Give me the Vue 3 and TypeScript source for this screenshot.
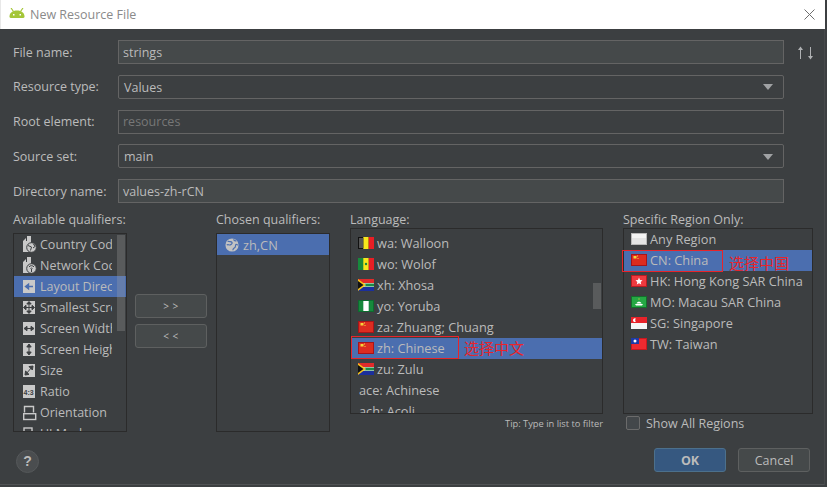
<script setup lang="ts">
type Row = { icon: string; text: string; selected?: boolean };

const fields = [
  { label: 'File name:', value: 'strings', kind: 'input' },
  { label: 'Resource type:', value: 'Values', kind: 'combo' },
  { label: 'Root element:', value: 'resources', kind: 'disabled' },
  { label: 'Source set:', value: 'main', kind: 'combo' },
  { label: 'Directory name:', value: 'values-zh-rCN', kind: 'input' },
];

const available: Row[] = [
  { icon: 'country', text: 'Country Code' },
  { icon: 'network', text: 'Network Code' },
  { icon: 'layout', text: 'Layout Direction', selected: true },
  { icon: 'smallest', text: 'Smallest Screen' },
  { icon: 'width', text: 'Screen Width' },
  { icon: 'height', text: 'Screen Height' },
  { icon: 'size', text: 'Size' },
  { icon: 'ratio', text: 'Ratio' },
  { icon: 'orient', text: 'Orientation' },
  { icon: 'ui', text: 'UI Mode' },
];

const languages: Row[] = [
  { icon: 'be', text: 'wa: Walloon' },
  { icon: 'sn', text: 'wo: Wolof' },
  { icon: 'za', text: 'xh: Xhosa' },
  { icon: 'ng', text: 'yo: Yoruba' },
  { icon: 'cn', text: 'za: Zhuang; Chuang' },
  { icon: 'cn', text: 'zh: Chinese', selected: true },
  { icon: 'za', text: 'zu: Zulu' },
  { icon: '', text: 'ace: Achinese' },
  { icon: '', text: 'ach: Acoli' },
];

const regions: Row[] = [
  { icon: 'any', text: 'Any Region' },
  { icon: 'cn', text: 'CN: China', selected: true },
  { icon: 'hk', text: 'HK: Hong Kong SAR China' },
  { icon: 'mo', text: 'MO: Macau SAR China' },
  { icon: 'sg', text: 'SG: Singapore' },
  { icon: 'tw', text: 'TW: Taiwan' },
];
</script>

<template>
  <div class="dialog">
    <header class="titlebar">
      <svg class="android" width="16" height="10" viewBox="0 0 16 10">
        <path d="M0.5 8.5C0.5 5 3.5 2.5 8 2.5S15.500 5 15.500 8.500Q15.500 10 14 10H2Q0.500 10 0.500 8.500Z" fill="#a4c639" />
        <path d="M2 0 4.500 3.500M14 0 11.500 3.500" stroke="#a4c639" stroke-width="1.200" />
        <rect x="4" y="6" width="1.500" height="1.500" fill="#fff" />
        <rect x="10.500" y="6" width="1.500" height="1.500" fill="#fff" />
      </svg>
      <span class="title">New Resource File</span>
      <svg class="close" width="11" height="11" viewBox="0 0 11 11">
        <path d="M0.5 0.5 10.500 10.500M10.500 0.5 0.5 10.500" stroke="#6e6e6e" stroke-width="1" />
      </svg>
    </header>

    <main class="body">
      <section class="form">
        <div v-for="f in fields" :key="f.label" class="field">
          <label class="field-label">{{ f.label }}</label>
          <div class="control" :class="f.kind">
            <span>{{ f.value }}</span>
            <i v-if="f.kind === 'combo'" class="caret"></i>
          </div>
        </div>
        <svg class="sort" width="16" height="14" viewBox="0 0 16 14">
          <path d="M2.500 13V3" stroke="#afb1b3" stroke-width="1" fill="none" />
          <path d="M0 4 2.500 0.500 5 4Z" fill="#afb1b3" />
          <path d="M12.500 1V11" stroke="#afb1b3" stroke-width="1" fill="none" />
          <path d="M10 10 12.500 13.500 15 10Z" fill="#afb1b3" />
        </svg>
      </section>

      <section class="columns">
        <div class="col col-available">
          <div class="col-label">Available qualifiers:</div>
          <div class="list tall">
            <div v-for="r in available" :key="r.text" class="row lifted" :class="{ selected: r.selected }">
              <svg class="qicon" width="16" height="18" viewBox="0 0 16 18">
                <template v-if="r.icon === 'country' || r.icon === 'network'">
                  <path d="M2 17V6L5 3V6H6V1H10V17Z" fill="#c9c9c9" />
                  <circle cx="10.500" cy="12.500" r="4.800" fill="#c9c9c9" stroke="#3c3f41" />
                  <path v-if="r.icon === 'network'" d="M8 11A3 3 0 0 1 13 11M9.500 12.500A1.500 1.500 0 0 1 11.500 12.500M10.500 13V16" stroke="#3c3f41" fill="none" />
                  <path v-else d="M7 10.500 10.500 12 9.500 15.500M12.500 9 14 11.500 12 13" stroke="#3c3f41" fill="none" />
                </template>
                <template v-else-if="r.icon === 'orient'">
                  <path d="M3.500 9.500V3.500H12.500V9.500" stroke="#c9c9c9" stroke-width="1.400" fill="none" />
                  <rect x="2.700" y="10.700" width="12" height="5.800" stroke="#c9c9c9" stroke-width="1.400" fill="none" />
                </template>
                <template v-else-if="r.icon === 'ui'">
                  <rect x="3" y="4" width="8" height="9" stroke="#c9c9c9" stroke-width="1.400" fill="none" />
                </template>
                <template v-else>
                  <rect x="2" y="3" width="12" height="13" fill="#c9c9c9" />
                  <path v-if="r.icon === 'layout'" d="M5 9.500H12M4.500 9.500 7.500 7.200V11.800Z" stroke="#4b6eaf" stroke-width="1.400" fill="#4b6eaf" />
                  <path v-else-if="r.icon === 'smallest'" d="M8 4V15M3 9.500H13M8 3.500 5.800 6H10.200ZM8 15.500 5.800 13H10.200ZM2.500 9.500 5 7.300V11.700ZM13.500 9.500 11 7.300V11.700Z" stroke="#3c3f41" fill="#3c3f41" />
                  <path v-else-if="r.icon === 'width'" d="M4 9.500H12M3 9.500 6 7.300V11.700ZM13 9.500 10 7.300V11.700Z" stroke="#3c3f41" fill="#3c3f41" />
                  <path v-else-if="r.icon === 'height'" d="M8 5V14M8 4 5.800 7H10.200ZM8 15 5.800 12H10.200Z" stroke="#3c3f41" fill="#3c3f41" />
                  <path v-else-if="r.icon === 'size'" d="M5 13 11 6M12 5 8 5.600 11.400 9ZM4 14 8 13.400 4.600 10Z" stroke="#3c3f41" fill="#3c3f41" />
                  <text v-else-if="r.icon === 'ratio'" x="2.600" y="12.500" class="tiny">4:3</text>
                </template>
              </svg>
              <span class="clip">{{ r.text }}</span>
            </div>
            <div class="thumb thumb-available"></div>
          </div>
        </div>

        <div class="mover">
          <button class="btn mover-btn" type="button">&gt; &gt;</button>
          <button class="btn mover-btn" type="button">&lt; &lt;</button>
        </div>

        <div class="col col-chosen">
          <div class="col-label">Chosen qualifiers:</div>
          <div class="list tall">
            <div class="row selected chosen-row">
              <svg class="globe" width="14" height="14" viewBox="0 0 16 16">
                <circle cx="8" cy="8" r="7.500" fill="#c2c2c2" />
                <path d="M3 3.500C5 5 7 3.500 8 5S6 8 5 8 3.500 7 2 8M9 14C9 11 12 12 12 9S14 8 15 8M10 1.500C10 3 12 3.500 13 3" stroke="#4b6eaf" stroke-width="1.400" fill="none" />
              </svg>
              <span>zh,CN</span>
            </div>
          </div>
        </div>

        <div class="col col-language">
          <div class="col-label">Language:</div>
          <div class="list short">
            <div class="lang-rows">
              <div v-for="r in languages" :key="r.text" class="row" :class="{ selected: r.selected, plain: !r.icon }">
                <svg v-if="r.icon" class="flag" width="16" height="12" viewBox="0 0 16 12">
                  <g v-if="r.icon === 'be'"><rect width="16" height="12" fill="#111" /><rect x="5.300" width="5.400" height="12" fill="#f6e71c" /><rect x="10.700" width="5.300" height="12" fill="#e81e25" /><rect x="1" y="1" width="4.300" height="10" fill="#555" /></g>
                  <g v-else-if="r.icon === 'sn'"><rect width="16" height="12" fill="#17893c" /><rect x="5.300" width="5.400" height="12" fill="#f6e71c" /><rect x="10.700" width="5.300" height="12" fill="#e81e25" /><circle cx="8" cy="6" r="1.200" fill="#17893c" /></g>
                  <g v-else-if="r.icon === 'za'"><rect width="16" height="12" fill="#fff" /><rect width="16" height="4" fill="#e02a2a" /><rect y="8" width="16" height="4" fill="#1b2f9c" /><path d="M0 0 8 6 0 12Z" fill="#f4c21a" /><path d="M0 2 5.500 6 0 10Z" fill="#111" /><path d="M6 4.500H16V7.500H6L8 6Z" fill="#1c8a46" /></g>
                  <g v-else-if="r.icon === 'ng'"><rect width="16" height="12" fill="#0e6a30" /><rect x="1" y="1" width="4.300" height="10" fill="#17893c" /><rect x="10.700" y="1" width="4.300" height="10" fill="#17893c" /><rect x="5.300" y="1" width="5.400" height="10" fill="#fff" /></g>
                  <g v-else-if="r.icon === 'cn'"><rect width="16" height="12" fill="#a8141a" /><rect x="1" y="1" width="14" height="10" fill="#dd2c20" /><path d="M2.500 2H5.500V4.500H2.500Z" fill="#f5d73a" /><rect x="6" y="1.500" width="1" height="1" fill="#f5d73a" /><rect x="6.500" y="4" width="1" height="1" fill="#f5d73a" /></g>
                </svg>
                <span>{{ r.text }}</span>
              </div>
            </div>
            <div class="thumb thumb-language"></div>
          </div>
          <div class="tip">Tip: Type in list to filter</div>
        </div>

        <div class="col col-region">
          <div class="col-label">Specific Region Only:</div>
          <div class="list short">
            <div v-for="r in regions" :key="r.text" class="row lifted" :class="{ selected: r.selected }">
              <svg class="flag" width="16" height="12" viewBox="0 0 16 12">
                <g v-if="r.icon === 'any'"><rect width="16" height="12" fill="#b9b9b9" /><rect x="1" y="1" width="14" height="10" fill="#e4e4e4" /><rect x="1" y="1" width="14" height="4" fill="#f4f4f4" /></g>
                <g v-else-if="r.icon === 'cn'"><rect width="16" height="12" fill="#a8141a" /><rect x="1" y="1" width="14" height="10" fill="#dd2c20" /><path d="M2.500 2H5.500V4.500H2.500Z" fill="#f5d73a" /><rect x="6" y="1.500" width="1" height="1" fill="#f5d73a" /><rect x="6.500" y="4" width="1" height="1" fill="#f5d73a" /></g>
                <g v-else-if="r.icon === 'hk'"><rect width="16" height="12" fill="#b81c22" /><rect x="1" y="1" width="14" height="10" fill="#ee3a3f" /><path d="M8 2.500 9 5 11.500 5.300 9.700 7 10.200 9.500 8 8.200 5.800 9.500 6.300 7 4.500 5.300 7 5Z" fill="#fff" /></g>
                <g v-else-if="r.icon === 'mo'"><rect width="16" height="12" fill="#146f2b" /><rect x="1" y="1" width="14" height="10" fill="#25a844" /><path d="M4 8H12L11 9.500H5Z" fill="#fff" /><path d="M5.500 7.500C6 5 10 5 10.500 7.500Z" fill="#fff" /><rect x="7.500" y="2.500" width="1" height="1" fill="#f5d73a" /></g>
                <g v-else-if="r.icon === 'sg'"><rect width="16" height="6" fill="#e8232a" /><rect y="6" width="16" height="6" fill="#f6f6f6" /><path d="M2 3.200A1.800 1.800 0 0 1 5 1.800 1.600 1.600 0 0 0 5 4.600 1.800 1.800 0 0 1 2 3.200Z" fill="#fff" /></g>
                <g v-else-if="r.icon === 'tw'"><rect width="16" height="12" fill="#c9181f" /><rect x="1" y="1" width="14" height="10" fill="#ee2a30" /><rect width="8" height="6" fill="#1d3aa8" /><circle cx="4" cy="3" r="1.500" fill="#fff" /></g>
              </svg>
              <span>{{ r.text }}</span>
            </div>
          </div>
          <label class="check-row"><i class="check"></i><span>Show All Regions</span></label>
        </div>
      </section>

      <footer class="footer">
        <div class="help">?</div>
        <div class="actions">
          <button class="btn ok" type="button">OK</button>
          <button class="btn" type="button">Cancel</button>
        </div>
      </footer>

      <div class="mark mark-zh"></div>
      <div class="note note-zh">选择中文</div>
      <div class="mark mark-cn"></div>
      <div class="note note-cn">选择中国</div>
    </main>
  </div>
</template>

<style scoped>
.dialog {
  width: 827px;
  height: 487px;
  background: #3c3f41;
  overflow: hidden;
  position: relative;
  font-family: "Open Sans", "Noto Sans", sans-serif;
  font-size: 12.5px;
  color: #bbbbbb;
}
.titlebar {
  height: 29px;
  width: 825px;
  background: #ffffff;
  display: flex;
  align-items: center;
  padding-left: 8px;
  box-sizing: border-box;
  border-left: 1px solid #e8e8e8;
}
.android { margin-right: 5px; margin-bottom: 4px; }
.title {
  color: #8a8a8a;
  font-size: 12.5px;
}
.close { margin-left: auto; margin-right: 10px; }

.body {
  position: relative;
  height: 456px;
  width: 825px;
  box-sizing: border-box;
  padding: 11px 0 0 13px;
  border-bottom: 1px solid #505254;
  border-right: 1px solid #47494b;
}

.form {
  position: relative;
  display: flex;
  flex-direction: column;
  gap: 10.75px;
  width: 771px;
}
.field { display: flex; align-items: center; height: 24px; }
.field-label { width: 105px; flex: none; }
.control {
  flex: 1;
  height: 24px;
  box-sizing: border-box;
  display: flex;
  align-items: center;
  padding: 0 5px 0 4px;
  color: #bbbbbb;
  background: #45494a;
  border: 1px solid #646464;
}
.control.combo {
  background: #3c3f41;
  border-radius: 2px;
  padding-left: 5px;
  padding-top: 1px;
}
.control.disabled {
  background: #3c3f41;
  color: #777777;
}
.caret {
  margin-left: auto;
  margin-right: 5px;
  width: 0;
  height: 0;
  border-left: 5px solid transparent;
  border-right: 5px solid transparent;
  border-top: 6px solid #a0a2a4;
}
.sort { position: absolute; left: 785px; top: 6px; }

.columns {
  display: flex;
  margin-top: 8px;
  align-items: flex-start;
}
.col-label { height: 17px; line-height: 17px; white-space: nowrap; }
.col-available { width: 114px; }
.col-chosen { width: 114px; margin-left: 9px; }
.col-language { width: 253px; margin-left: 20px; }
.col-region { width: 190px; margin-left: 20px; }

.list {
  position: relative;
  box-sizing: border-box;
  border: 1px solid #2b2b2b;
  overflow: hidden;
  background: #3c3f41;
}
.tall { height: 199px; margin-top: 5px; }
.short { height: 186px; }
.row {
  height: 21px;
  box-sizing: border-box;
  display: flex;
  align-items: center;
  white-space: nowrap;
  padding-left: 7px;
  color: #bbbbbb;
  font-size: 12.75px;
}
.row.lifted { padding-bottom: 1px; }
.col-available .row { font-size: 12.5px; }
.row.plain { padding-left: 8px; }
.row.selected { background: #4b6eaf; }
.qicon { flex: none; margin-right: 3px; }
.flag { flex: none; margin-right: 3px; }
.clip {
  display: block;
  width: 72px;
  overflow: hidden;
}
.tiny { font-family: "Liberation Sans", sans-serif; font-size: 7px; font-weight: 700; fill: #3c3f41; }
.chosen-row { padding-left: 8px; }
.globe { flex: none; margin-right: 4px; }

.lang-rows { padding-top: 3.5px; }

.thumb {
  position: absolute;
  background: rgba(166, 166, 166, 0.28);
}
.thumb-available { left: 103px; top: 1px; width: 8px; height: 96px; }
.thumb-language { left: 242px; top: 54px; width: 8px; height: 26px; }

.mover {
  width: 72px;
  margin-left: 8px;
  margin-top: 83px;
  flex: none;
  display: flex;
  flex-direction: column;
  gap: 6px;
}
.btn {
  width: 72px;
  height: 24px;
  box-sizing: border-box;
  background: #45494a;
  border: 1px solid #5e6060;
  border-radius: 3px;
  color: #bbbbbb;
  font: inherit;
  padding: 0;
}
.mover-btn { font-size: 10px; letter-spacing: 0.5px; }

.tip {
  text-align: right;
  font-size: 9.3px;
  line-height: 13px;
  margin-top: 2.5px;
  color: #bbbbbb;
}
.check-row {
  display: flex;
  align-items: center;
  height: 18px;
  padding-left: 3px;
  gap: 6px;
}
.check {
  width: 14px;
  height: 14px;
  box-sizing: border-box;
  border: 1px solid #6b6b6b;
  border-radius: 2px;
  background: #43474a;
}

.footer {
  position: absolute;
  left: 16px;
  right: 14px;
  top: 419px;
  display: flex;
  justify-content: space-between;
  align-items: center;
  height: 24px;
}
.help {
  width: 23px;
  height: 23px;
  margin-top: 2px;
  border-radius: 50%;
  box-sizing: border-box;
  border: 1px solid #55585a;
  background: #4a4d4f;
  color: #bbbbbb;
  text-align: center;
  font-weight: 700;
  font-size: 14px;
  line-height: 21px;
  font-family: "Liberation Sans", sans-serif;
}
.actions { display: flex; gap: 12px; }
.ok {
  background: #365880;
  border-color: #4c708c;
  font-weight: 700;
}

.mark {
  position: absolute;
  box-sizing: border-box;
  border: 1px solid #e8242a;
  pointer-events: none;
}
.mark-zh { left: 351px; top: 307px; width: 108px; height: 23px; }
.mark-cn { left: 622px; top: 221px; width: 101px; height: 22px; }
.note {
  position: absolute;
  color: #e8242a;
  font-family: "Noto Sans CJK SC", sans-serif;
  font-size: 15px;
  line-height: 20px;
  white-space: nowrap;
}
.note-zh { left: 464px; top: 309px; }
.note-cn { left: 729px; top: 224px; }
</style>

<style>
html, body { margin: 0; background: #3c3f41; }
</style>
